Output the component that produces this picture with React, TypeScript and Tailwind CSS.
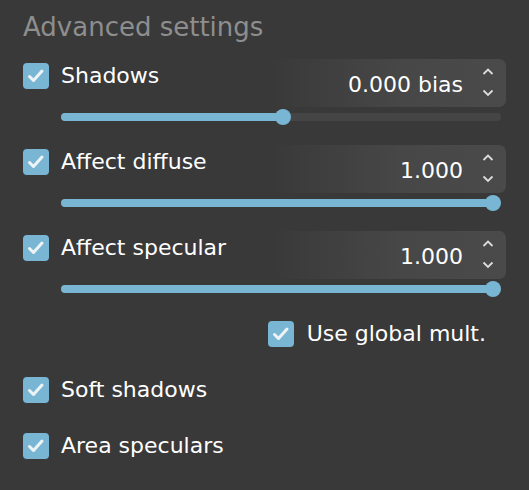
import React from "react";

const font = { fontFamily: '"DejaVu Sans", Verdana, sans-serif' };

function Check() {
  return (
    <div className="w-[26px] h-[26px] shrink-0 rounded-[4px] bg-[#79b6d4] flex items-center justify-center">
      <svg width="26" height="26" viewBox="0 0 26 26">
        <path d="M6.5 13.5 L10.5 17.5 L19 8" fill="none" stroke="#eef3f6" strokeWidth="3" strokeLinecap="round" strokeLinejoin="round" />
      </svg>
    </div>
  );
}

function Spinner() {
  return (
    <svg width="12" height="30" viewBox="0 0 12 30" className="shrink-0">
      <path d="M1.5 6 L6 1.5 L10.5 6" fill="none" stroke="#dcdcdc" strokeWidth="1.8" />
      <path d="M1.5 22.5 L6 27 L10.5 22.5" fill="none" stroke="#dcdcdc" strokeWidth="1.8" />
    </svg>
  );
}

function SliderRow({ label, value, pct }: { label: string; value: string; pct: number }) {
  return (
    <div className="flex flex-col">
      <div className="flex items-start justify-between h-[48px]">
        <div className="flex items-center gap-[12px] mt-[4px]">
          <Check />
          <span className="text-[22px] leading-[26px] text-white">{label}</span>
        </div>
        <div className="w-[236px] h-[48px] rounded-[7px] bg-[linear-gradient(to_right,rgba(72,72,72,0)_0%,#474747_55%,#4a4a4a_100%)] flex items-center justify-end pr-[12px] gap-[19px]">
          <span className="text-[22px] leading-[26px] text-white mt-[4px]">{value}</span>
          <Spinner />
        </div>
      </div>
      <div className="relative ml-[38px] mr-[5px] h-[16px] mt-[2px]">
        <div className="absolute left-0 right-0 top-[4px] h-[8px] rounded-full bg-[#454545]" />
        <div
          className="absolute left-0 top-[4px] h-[8px] rounded-full bg-[#79b6d4]"
          style={{ width: `calc(${pct} * (100% - 16px) + 8px)` }}
        />
        <div
          className="absolute top-0 w-[16px] h-[16px] rounded-full bg-[#79b6d4]"
          style={{ left: `calc(${pct} * (100% - 16px))` }}
        />
      </div>
    </div>
  );
}

export default function App() {
  return (
    <div className="w-[529px] h-[490px] bg-[#393939] px-[23px] pt-[12px] overflow-hidden" style={font}>
      <div className="text-[26px] leading-[30px] text-[#8e8e8e]">Advanced settings</div>
      <div className="mt-[17px]">
        <SliderRow label="Shadows" value="0.000 bias" pct={0.505} />
      </div>
      <div className="mt-[20px]">
        <SliderRow label="Affect diffuse" value="1.000" pct={1} />
      </div>
      <div className="mt-[20px]">
        <SliderRow label="Affect specular" value="1.000" pct={1} />
      </div>
      <div className="flex items-center justify-end gap-[13px] mt-[24px] mr-[20px]">
        <Check />
        <span className="text-[22px] leading-[26px] text-white">Use global mult.</span>
      </div>
      <div className="flex items-center gap-[12px] mt-[30px]">
        <Check />
        <span className="text-[22px] leading-[26px] text-white">Soft shadows</span>
      </div>
      <div className="flex items-center gap-[12px] mt-[30px]">
        <Check />
        <span className="text-[22px] leading-[26px] text-white">Area speculars</span>
      </div>
    </div>
  );
}
